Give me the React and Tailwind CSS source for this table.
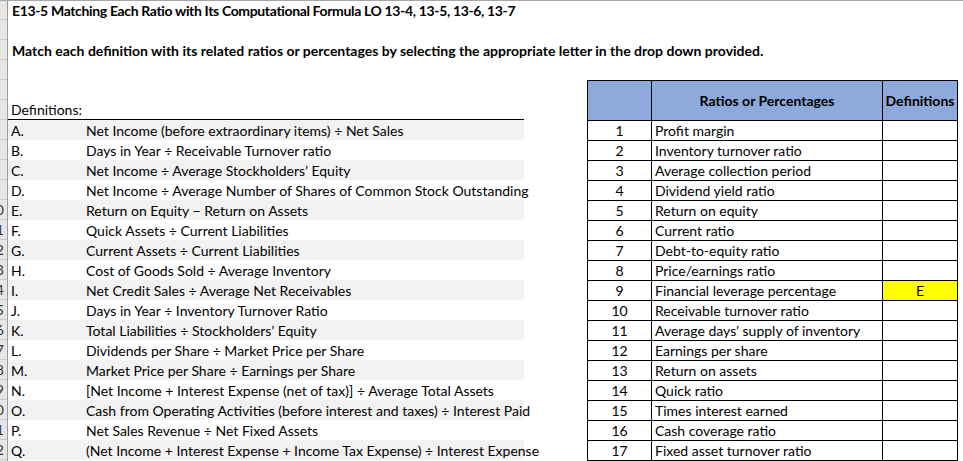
import React from "react";

const defs = [
  ["A.", "Net Income (before extraordinary items) ÷ Net Sales"],
  ["B.", "Days in Year ÷ Receivable Turnover ratio"],
  ["C.", "Net Income ÷ Average Stockholders’ Equity"],
  ["D.", "Net Income ÷ Average Number of Shares of Common Stock Outstanding"],
  ["E.", "Return on Equity − Return on Assets"],
  ["F.", "Quick Assets ÷ Current Liabilities"],
  ["G.", "Current Assets ÷ Current Liabilities"],
  ["H.", "Cost of Goods Sold ÷ Average Inventory"],
  ["I.", "Net Credit Sales ÷ Average Net Receivables"],
  ["J.", "Days in Year ÷ Inventory Turnover Ratio"],
  ["K.", "Total Liabilities ÷ Stockholders’ Equity"],
  ["L.", "Dividends per Share ÷ Market Price per Share"],
  ["M.", "Market Price per Share ÷ Earnings per Share"],
  ["N.", "[Net Income + Interest Expense (net of tax)] ÷ Average Total Assets"],
  ["O.", "Cash from Operating Activities (before interest and taxes) ÷ Interest Paid"],
  ["P.", "Net Sales Revenue ÷ Net Fixed Assets"],
  ["Q.", "(Net Income + Interest Expense + Income Tax Expense) ÷ Interest Expense"],
];

const ratios = [
  "Profit margin",
  "Inventory turnover ratio",
  "Average collection period",
  "Dividend yield ratio",
  "Return on equity",
  "Current ratio",
  "Debt-to-equity ratio",
  "Price/earnings ratio",
  "Financial leverage percentage",
  "Receivable turnover ratio",
  "Average days’ supply of inventory",
  "Earnings per share",
  "Return on assets",
  "Quick ratio",
  "Times interest earned",
  "Cash coverage ratio",
  "Fixed asset turnover ratio",
];

const rowNums = [0, 1, 2, 3, 4, 5, 6, 7, 8, 9, 10, 11, 12, 13, 14, 15, 16, 17, 18, 19, 20, 21, 22, 23];

export default function App() {
  return (
    <div
      className="w-[963px] h-[461px] overflow-hidden bg-white text-black flex border-t border-[#a6a6a6]"
      style={{ fontFamily: "Lato, 'Open Sans', sans-serif" }}
    >
      {/* row header strip */}
      <div className="w-[8px] shrink-0 bg-[#e6e6e6] border-r border-[#9b9b9b] flex flex-col overflow-hidden">
        {rowNums.map((n) => (
          <div
            key={n}
            className={`${n === 0 ? "h-[19px]" : "h-[20px]"} shrink-0 border-b border-[#c8c8c8] flex items-center justify-end pr-[3px] text-[14px] leading-none text-[#333] whitespace-nowrap overflow-hidden`}
          >
            {n >= 10 ? n : ""}
          </div>
        ))}
      </div>

      {/* content */}
      <div className="flex-1 flex flex-col text-[14px]">
        <div className="h-[19px] flex items-center pl-[4px] font-bold whitespace-nowrap tracking-[-0.35px]">
          E13-5 Matching Each Ratio with Its Computational Formula LO 13-4, 13-5, 13-6, 13-7
        </div>
        <div className="h-[20px]" />
        <div className="h-[20px] flex items-center pl-[4px] font-bold whitespace-nowrap">
          Match each definition with its related ratios or percentages by selecting the appropriate letter in the drop down provided.
        </div>
        <div className="h-[20px]" />

        <div className="flex">
          {/* definitions */}
          <div className="w-[516px] flex flex-col">
            <div className="h-[20px]" />
            <div className="h-[20px] flex items-center pl-[3px] border-b border-black whitespace-nowrap">
              Definitions:
            </div>
            {defs.map(([l, f], i) => (
              <div
                key={l}
                className={`h-[20px] flex items-center whitespace-nowrap ${i % 2 === 0 ? "bg-[#f2f2f2]" : "bg-white"}`}
              >
                <span className="w-[78px] pl-[3px] shrink-0">{l}</span>
                <span>{f}</span>
              </div>
            ))}
          </div>

          {/* table */}
          <div className="ml-[63px] w-[371px]">
            <table className="border-collapse w-full">
              <tbody>
                <tr className="h-[40px] bg-[#8ea9db] font-bold">
                  <td className="border border-black w-[64px]" />
                  <td className="border border-black text-center w-[231px]">Ratios or Percentages</td>
                  <td className="border border-black text-center whitespace-nowrap">Definitions</td>
                </tr>
                {ratios.map((r, i) => (
                  <tr key={r} className="h-[20px]">
                    <td className="border border-black text-center leading-[18px] p-0">{i + 1}</td>
                    <td className="border border-black pl-[3px] leading-[18px] p-0 whitespace-nowrap">{r}</td>
                    <td className={`border border-black text-center leading-[18px] p-0 ${i === 8 ? "bg-[#ffff00]" : ""}`}>
                      {i === 8 ? "E" : ""}
                    </td>
                  </tr>
                ))}
              </tbody>
            </table>
          </div>
        </div>
      </div>
    </div>
  );
}
